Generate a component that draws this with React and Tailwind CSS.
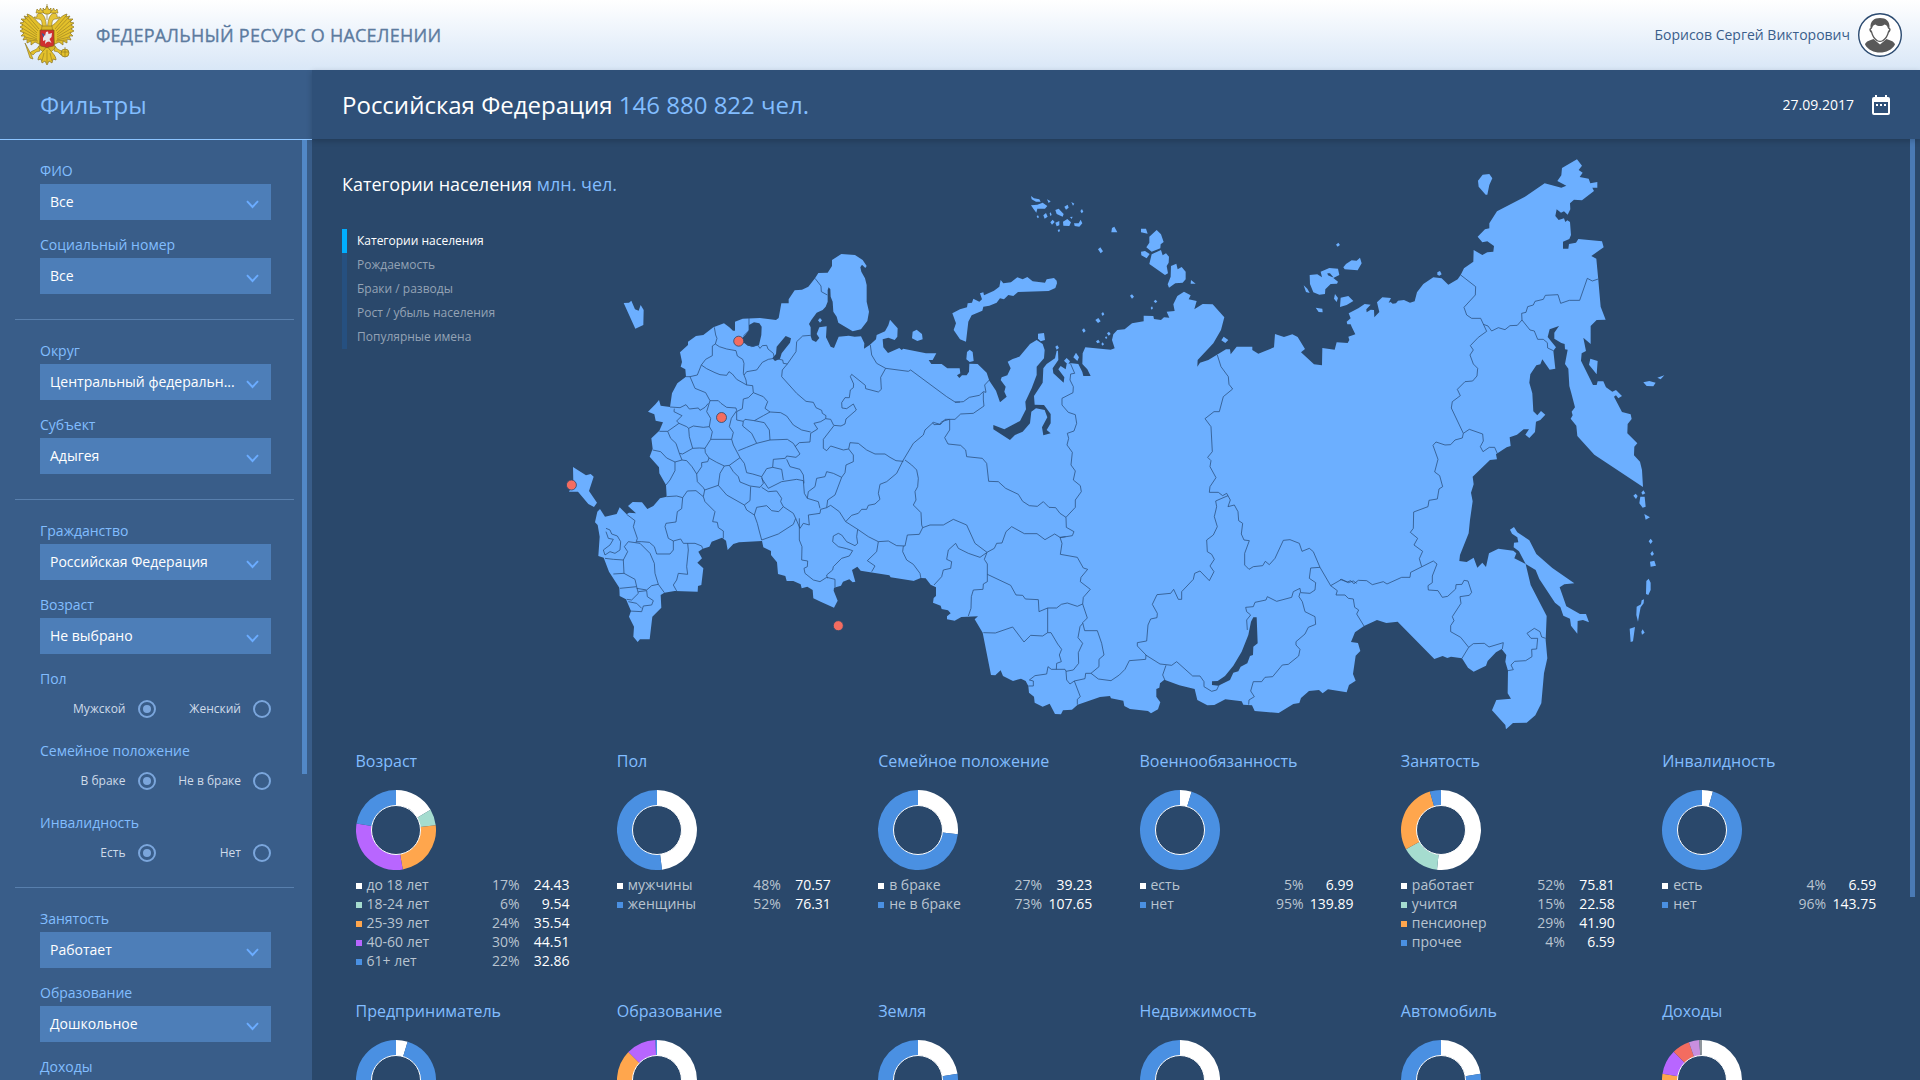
import React from "react";

const FONT = "font-['Open_Sans','Noto_Sans',sans-serif]";

/* ---------- map geometry: five survey sheets, three units per pixel ---------- */
const SHEETS = { A: [60, 270], B: [1080, 0], C: [2460, 0], D: [1080, 1080], E: [2400, 1020] };

function ring(parts) {
  const pts = [];
  parts.forEach(([sheet, text]) => {
    const [ox, oy] = SHEETS[sheet];
    const n = text.trim().split(/[\s,]+/).map(Number);
    for (let i = 0; i < n.length; i += 2) pts.push(`${n[i] + ox} ${n[i + 1] + oy}`);
  });
  return "M" + pts.join("L");
}

const MAINLAND = ring([
  ["A", "519,302 525,302 525,275 548,266 600,264 648,270 656,264 664,220 686,220 686,208 704,181 726,179 745,170 765,145 775,129 803,128 816,108 816,90 844,72 885,75 908,90 920,108 916,114 906,104 901,112 904,125 915,145 920,165 920,215 927,245 922,273 903,298 878,304 835,278 830,260 820,245 818,215 812,200 811,178 806,172 803,180 803,215 797,230 788,240 770,248 754,270 747,282 752,292 752,318 756,330 768,336 778,324 770,312 778,292 800,289 798,322 812,350 822,354 836,320 866,317 884,320 903,319 913,340 912,356 930,344 948,328 950,315 975,304 985,286 990,269 1013,295 1012,320 1004,330 985,323 968,328 970,352 984,369 1018,354 1025,360"],
  ["B", "10,626 78,640 109,640 98,660 86,660 94,672 125,672 142,685 179,685 181,700 171,706 178,714 186,706 200,706 207,695 208,671 233,672 260,698 268,722 288,752 300,787 320,770 313,755 317,740 302,720 305,712 322,706 332,685 323,665 338,657 358,650 390,612 410,600 428,612 434,630 432,655 410,680 410,705 395,745 376,785 378,808 360,843 313,868 280,855 280,868 330,900 345,885 368,875 390,850 394,815 408,805 434,810 442,832 426,862 430,886 452,880 440,870 452,850 452,822 432,795 404,794 402,768 428,728 430,685 440,672 465,655 470,632 474,632 475,660 458,685 460,700 491,728 493,712 475,688 482,678 497,688 500,672 515,670 535,672 547,696 550,708 572,708 562,688 547,672 548,640 556,622 632,629 644,625 636,600 640,583 652,570 674,568 696,550 731,544 731,527 760,528 762,537 783,540 792,532 808,533 800,515 824,513 820,493 832,468 852,455 872,466 866,478 890,483 883,508 908,492 938,493 973,532 963,570 940,610 893,660 892,680 900,668 925,660 978,628 990,628 992,643 1010,620 1057,620 1057,630 1075,641 1122,622 1125,582 1152,591 1177,583 1193,591 1215,627 1203,637 1242,673 1266,676 1267,624 1304,629 1310,607 1343,609 1348,600 1345,590 1366,583 1355,560 1352,553 1342,553 1340,545 1352,535 1346,520 1375,505"],
  ["C", "14,492 32,494 19,508 20,517 32,509 42,510 43,532 58,516 51,487 67,472 93,474 86,488 92,486 98,491 108,490 114,482 132,480 150,488 164,484 171,457 190,432 220,412 245,415 265,434 293,418 302,405 312,385 340,365 341,330 367,345 382,337 400,335 402,318 382,304 367,307 353,290 375,268 388,265 388,250 411,214 495,170 554,130 604,143 619,137 592,123 604,106 606,84 651,58 666,77 656,90 668,98 659,111 686,116 691,130 712,126 712,143 697,143 702,153 666,181 642,179 630,190 631,208 623,224 612,214 603,218 590,208 586,228 596,240 612,235 616,246 622,241 630,246 633,285 628,297 609,305 609,326 625,326 627,312 648,308 655,297 726,304 731,322 694,348 709,356 715,420 722,500 737,539 710,540 692,558 692,612 670,593 678,633 665,640 663,662 699,735 710,735 713,724 730,724 738,742 757,755 768,750 786,768 775,775 768,766 762,770 786,816 812,823 815,837 803,852 802,880 832,910 823,920 822,946 840,965 846,990 849,1041 703,944 652,888 649,857 632,836 638,826 635,815 645,802 634,760 628,738 625,686 615,672 623,629 615,628 614,612 604,609 583,596 583,578 597,558 569,568 563,591 588,622 580,632 586,686 569,689 547,658 541,673 529,676 511,703 508,728 517,760 520,814 532,826 543,813 556,824 541,840 528,845 525,876 508,894 496,884 507,868 491,868 471,884 449,892 452,918 440,922 408,943 411,958 390,960 338,1010 341,1033 333,1058 338,1084 330,1140"],
  ["E", "386,160 360,225 358,243 380,246 401,233 412,263 427,248 438,261 447,220 475,206 520,212 529,220 523,235 557,252 572,315 620,408 617,480 622,535 612,580 604,670 586,706 560,728 519,729 498,748 496,735 456,691 469,660 513,656 503,640 504,572 496,545 499,525 485,507 468,517 443,543 438,557 401,575 384,563 366,535 333,530 322,534 308,528 283,537 173,425 139,429 111,420 72,438 45,457 33,486 54,489 61,513 47,527 39,582 47,602 27,615 20,637"],
  ["D", "1340,577 1284,568 1268,580 1257,570 1227,573 1203,594 1198,609 1180,612 1136,639 1064,633 1056,616 1030,614 1025,604 976,598 943,615 922,616 892,600 884,567 838,556 793,539 780,550 778,563 769,567 769,590 781,607 774,628 753,640 744,633 690,627 673,618 670,602 633,595 630,588 600,591 533,614 516,629 489,631 483,643 465,642 449,611 428,620 404,608 402,590 387,578 385,558 377,543 363,536 339,543 309,528 302,511 286,526 273,525 248,398 224,358 234,349 184,351 164,362 141,358 141,349 152,340 144,331 125,327 122,317 99,308 101,294 108,288 108,262 92,254 77,235 62,234 42,242"],
  ["A", "1063,1053 992,1042 988,1036 940,1028 902,1022 892,1010 876,1020 886,1055 878,1057 868,1048 849,1055 843,1067 822,1073 821,1082 833,1112 822,1133 782,1115 760,1105 758,1080 742,1070 725,1075 722,1063 700,1053 680,1053 676,1038 654,1032 651,997 633,975 633,963 610,952 606,933 537,937 520,942 503,960 498,932 486,923 455,935 448,950 428,956 415,965 426,985 412,998 430,1015 424,1065 414,1068 413,1085 344,1083 313,1088 302,1095 304,1133 277,1160 269,1228 240,1228 233,1236 220,1220 222,1190 207,1160 213,1143 198,1108 179,1098 178,1073 147,1025 131,983 115,978 119,920 113,885 105,877 112,845 120,837 135,860 170,852 179,832 200,853 207,848 228,850 204,828 218,816 246,817 262,837 280,828 300,805 320,800 318,765 298,730 297,712 269,680 278,656 274,625 298,602 309,577 287,572 283,553 264,545 287,522 297,510 302,527 330,531 336,490 352,460 378,440 376,418 362,410 366,396 360,367 384,345 384,335 408,318 430,315 460,292 492,280 508,292"],
]);

const ISLANDS = [
  ["A", "191,219 207,218 214,212 225,238 236,242 242,225 251,240 250,285 226,296"],
  ["A", "39,711 78,736 92,732 101,740 87,783 111,818 102,831 85,822 54,785 27,785 40,760"],
  ["A", "780,264 786,271 780,278 774,271"],
  ["A", "1070,299 1086,312 1088,328 1072,333 1056,325 1058,305"],
  ["A", "1229,359 1238,366 1241,393 1229,396 1219,388 1221,366"],
  ["B", "471,430 466,444 446,453 354,456 340,468 325,465 312,478 300,475 290,488 268,497 250,500 247,512 215,526 205,545 198,605 180,598 161,570 168,550 157,520 180,508 201,502 203,490 216,488 220,476 238,485 246,478 240,460 250,457 252,466 282,452 298,440 302,420 310,430 333,427 352,412 368,418 382,411 398,424 435,428 440,418 462,414 470,422"],
  ["B", "414,581 432,579 435,600 422,604 414,596"],
  ["B", "520,652 528,638 537,652 532,663"],
  ["B", "492,662 500,654 510,664 504,674"],
  ["B", "466,620 472,616 477,624 470,629"],
  ["B", "393,168 402,175 418,178 422,185 408,185 395,178"],
  ["B", "393,196 412,194 428,188 442,198 435,206 412,206 409,218 400,206"],
  ["B", "441,178 452,184 446,189"], ["B", "466,210 476,206 491,222 488,230 470,222"],
  ["B", "493,200 503,194 506,203 498,209"], ["B", "514,186 523,191 519,197"], ["B", "541,213 546,207 550,215 545,220"],
  ["B", "430,226 438,219 443,230 434,236"], ["B", "410,229 414,226 417,232 413,235"], ["B", "449,220 452,217 455,225 451,228"],
  ["B", "451,247 458,239 464,246 456,254"], ["B", "466,248 478,243 478,256 470,259"], ["B", "489,245 502,237 513,247 508,258 490,257"],
  ["B", "510,231 518,230 515,237"], ["B", "522,250 536,250 542,239 547,250 538,260 524,258"], ["B", "473,271 478,267 480,273 476,277"],
  ["B", "636,264 643,260 652,277 634,277"], ["B", "594,328 601,322 609,334 602,340"],
  ["B", "723,266 738,266 743,281 723,277"], ["B", "770,270 783,283 791,306 782,313 781,325 755,335 739,322 748,308 748,290"],
  ["B", "723,335 735,333 749,342 740,355 724,346"], ["B", "755,343 783,330 788,346 798,340 807,350 806,368 800,378 804,400 795,405 748,372"],
  ["B", "813,378 829,371 833,388 845,381 857,395 857,418 848,428 826,430 807,443 803,433 812,410"],
  ["B", "873,420 887,431 872,431"], ["B", "690,467 696,463 702,470 696,476"], ["B", "761,484 767,479 772,485 766,489"], ["B", "752,504 756,499 759,505 755,509"],
  ["B", "604,521 609,516 613,523 608,528"], ["B", "586,540 595,534 602,544 594,549"], ["B", "546,570 552,565 557,573 551,578"],
  ["B", "621,580 627,575 632,582 626,587"], ["B", "588,604 595,599 600,607 592,610"], ["B", "615,592 619,589 622,594 618,597"], ["B", "604,612 608,607 612,613 608,617"],
  ["B", "964,601 971,590 985,600 976,609"],
  ["B", "1308,314 1315,308 1320,315 1313,320"],
  ["B", "1330,382 1338,372 1355,361 1370,362 1380,353 1385,370 1373,391 1334,388"],
  ["B", "1229,405 1252,403 1266,412 1262,395 1288,384 1314,386 1318,405 1300,414 1314,425 1311,431 1292,432 1276,448 1275,462 1258,464 1240,457 1230,432"],
  ["B", "1211,436 1222,446 1229,459 1218,456"], ["B", "1305,462 1314,474 1310,486 1302,476"],
  ["B", "1322,473 1345,468 1360,483 1340,495 1320,501"], ["B", "1247,503 1267,506 1268,517 1256,516"],
  ["C", "368,104 388,102 397,115 388,135 382,164 377,164 356,140 354,122"],
  ["C", "232,397 240,393 245,403 238,407 232,404"],
  ["C", "691,656 713,663 710,703 687,674"], ["C", "850,727 868,723 887,728 880,739 860,738"], ["C", "892,713 913,706 902,718"],
  ["E", "510,149 522,141 532,157 568,181 589,222 637,264 703,310 673,313 659,322 679,379 720,402 738,402 747,427 729,420 713,423 712,461 693,437 690,416 670,407 661,381 645,368 598,297 587,270 557,252 537,214 521,202 522,188 535,187 532,172 516,161"],
  ["E", "904,38 910,31 916,40 908,44"], ["E", "880,47 887,41 893,48 888,57"], ["E", "901,50 914,50 917,80 908,83 898,70"],
  ["E", "913,102 930,112 917,119"], ["E", "926,184 932,176 938,184 932,192"], ["E", "931,221 937,213 942,222 936,228"], ["E", "930,245 943,242 948,257 932,260"],
  ["E", "919,303 926,296 932,308 932,330 925,345 918,342"], ["E", "905,361 912,358 911,370 902,382 897,408 894,425 889,405 890,380 903,373"],
  ["E", "869,446 885,441 879,484 872,486"], ["E", "904,455 908,448 914,458 906,464"],
].map((p) => ring([p]) + "Z").join("");

const LAKES = [
  ["A", "567,285 582,277 598,280 605,290 604,315 597,345 580,350 563,347 552,338 546,325 556,315 567,300"],
  ["A", "677,318 693,325 690,338 665,370 660,386 645,393 637,385 648,372 650,350 660,338"],
  ["D", "1060,352 1070,352 1073,430 1060,440 1059,465 1050,468 1042,490 1022,500 1015,514 1000,518 990,540 955,557 936,555 936,544 953,543 975,528 1000,497 1025,455 1045,405 1053,365"],
  ["B", "1282,400 1290,400 1300,412 1312,415 1296,411 1284,406"],
].map((p) => ring([p]) + "Z").join("");

const BORDERS = [
  ["A", "463,292 467,315 471,325 466,342 457,348 457,377 437,388 424,405 412,435 390,440 378,440"],
  ["A", "466,342 478,350 500,357 528,362 532,378 548,388 552,400 550,430 558,450 560,465"],
  ["A", "567,264 567,302 550,318"], ["A", "560,340 575,350 593,345 600,355 607,347 620,346 624,357 640,370 643,385 625,388 607,397 590,420 560,425 552,435"],
  ["A", "424,405 440,416 465,428 480,434 500,436 507,425 517,432 530,448 560,465 578,467 580,488"],
  ["A", "640,385 668,390 670,400 682,402 708,365 710,335 728,318 752,316"],
  ["A", "682,402 667,420 665,440 710,490 738,514 760,517 768,533 785,541 787,550 798,557 797,566"],
  ["A", "765,145 783,168 784,185 802,195"],
  ["A", "931,345 935,375 950,400 977,415 962,442 964,478 955,486 917,476 916,466 875,433 871,440 881,462 880,473 871,480 868,503 855,503 845,518 846,534 860,536 880,522 889,540 858,567 855,582 843,588 821,586 812,568 797,566 782,575 762,580 773,597 752,610 750,636 718,638 705,650"],
  ["A", "977,415 1045,424 1052,420 1160,500 1185,516 1200,516"],
  ["A", "390,440 405,475 437,488 450,512 475,512 483,520 500,532 528,534 530,542 514,565 508,590 520,607 515,628 452,628 457,605 448,590 452,565 440,545 450,512"],
  ["A", "330,531 360,533 378,524 388,537 415,534 420,541 435,532 445,520"],
  ["A", "343,536 342,545 366,557 350,573 357,580 323,604 298,604"], ["A", "357,580 380,590 386,595 388,620 398,655 368,672 358,670 348,640 332,625 323,604"],
  ["A", "386,595 400,588 430,592 448,590"], ["A", "398,655 418,654 435,655 452,628"], ["A", "435,655 436,668 447,684 443,695 425,698 425,710 410,732 396,710 380,692 366,690 358,670"],
  ["A", "278,660 302,665 320,684 345,696 345,722 330,750 318,765"], ["A", "345,696 366,690"],
  ["A", "447,684 470,697 493,708 508,706 540,683 520,645 515,628"],
  ["A", "410,732 412,755 430,773 434,780 475,766 480,730 493,708"], ["A", "320,800 350,798 368,803 382,783 408,782 430,800 434,780"],
  ["A", "368,803 365,836 352,845 348,876 318,880 315,890 325,925 340,933 340,960 330,972 290,972 283,950 268,937 245,935 230,935"],
  ["A", "430,800 435,815 465,845 458,875 472,877 475,893 490,903 490,925"],
  ["A", "580,488 610,500 623,515 615,535 630,546 610,557 583,572 555,568 550,574 530,570 530,545 547,536 550,507 565,503 580,488"],
  ["A", "630,546 662,548 680,558 700,585 725,600 752,606"], ["A", "583,572 613,578 628,600 630,630 590,640"], ["A", "550,574 548,588 575,610 590,640 560,652 535,662"],
  ["A", "630,630 682,628 700,640 720,672 708,682 680,678 676,685 640,688 638,712 620,716 605,740 578,732 560,728 553,700 540,683"],
  ["A", "508,706 520,725 535,740 540,756 570,768 600,772 610,760 605,740"], ["A", "475,766 500,795 553,825 570,812 572,770"],
  ["A", "553,825 560,840 583,855 592,880 597,900 605,930 655,912 700,883 707,865 700,850 670,830 656,845 635,842 620,827 590,832 583,855"],
  ["A", "605,772 625,785 650,783 665,805 662,815 670,830"], ["A", "605,745 625,775 665,755 710,748 730,752 733,790 742,805 775,815 780,835"],
  ["A", "638,712 665,718 670,750"], ["A", "680,688 690,710 720,718 730,735 732,760"],
  ["A", "707,865 720,895 730,880 748,885 745,855 780,850 782,838 800,833 812,826 838,845 857,875 893,898 890,920 893,940 885,947 860,935 845,915 835,910 820,918 818,935 835,950 860,956 878,962 868,978 845,985 820,1010 818,1020 800,1035 802,1045"],
  ["A", "718,865 718,930 726,950 725,990 743,993 742,1010 732,1015 735,1030 760,1050 780,1055 800,1042 825,1048 825,1072"],
  ["A", "742,805 745,785 765,770 770,745 795,740 800,725 820,730 845,742 825,795 803,810 800,833"],
  ["A", "845,742 855,728 858,705 880,695 880,675 866,657 870,638 895,640 920,660 945,672 975,672 990,682 1008,692 1030,694"],
  ["A", "866,657 850,660 812,648 800,662 790,655 790,628 821,588"],
  ["A", "1168,568 1145,575 1140,583 1120,577 1095,600 1090,615 1060,640 1030,690 1010,730 980,755 960,763 955,790 960,808 945,822 925,826 920,838 905,838 895,850 875,856 857,875"],
  ["A", "1035,690 1055,705 1070,720 1075,745 1073,770 1065,785 1068,810 1060,825 1083,848 1085,885 1088,893"],
  ["A", "893,898 925,920 955,935 950,965 922,992 945,1008 935,1025"], ["A", "955,935 985,933 1010,947 1035,948 1042,915 1078,913 1088,893 1110,885 1150,885 1180,868 1220,885 1245,940 1281,967"],
  ["A", "1030,948 1028,965 1040,990 1060,1003 1080,1030 1083,1046"], ["A", "1122,1065 1145,1040 1150,1020 1172,1015 1175,995 1160,988 1165,960 1187,940 1195,955 1225,970 1260,982 1280,968"],
  ["A", "313,1088 295,1063 285,1030 283,1000 270,970 240,940 205,935 193,950 203,965 190,990 192,1030 225,1048 230,1070 180,1075"],
  ["A", "135,985 160,988 190,990"], ["A", "160,1032 192,1030"], ["A", "230,1075 260,1080 275,1067 295,1063"],
  ["A", "138,895 150,900 155,912 172,918 182,935 180,960 165,970 150,965 135,975 130,960 150,945 160,928 145,925 138,905"],
  ["A", "200,853 225,872 220,890 232,925 228,938"], ["A", "340,933 362,927 370,940 405,940 425,948 428,956"], ["A", "383,940 385,960 380,1010 383,1033 355,1030 350,1050 340,1065 350,1083"],
  ["A", "230,1070 235,1090 215,1110 200,1108"], ["A", "235,1085 260,1082 262,1100 280,1112 275,1125 250,1128 245,1145 207,1143"], ["A", "205,1115 230,1120 245,1135"],
  ["B", "165,787 190,785 208,772 238,766 250,755 258,757 254,735 268,720"], ["B", "250,757 250,780 252,798 220,820 182,822 165,838 135,838 122,853 102,854 98,848"],
  ["B", "149,838 149,870 134,893 144,912 182,916 197,930 200,950 247,955 260,970 266,1024 295,1025 317,1045 355,1063 368,1084 388,1097 412,1099 430,1085 447,1102 467,1103 480,1120 498,1132"],
  ["B", "512,672 524,700 512,702 510,720 520,740 519,758 486,775 486,795 505,817 526,824 530,850 522,873 502,880 506,895 501,915 517,937 513,975 526,993 520,1020 541,1037 544,1055 526,1080 526,1102 498,1132 499,1162 522,1175 517,1187 480,1193"],
  ["B", "952,645 963,680 985,710 987,733 998,747 970,770 958,815 942,815 915,836 933,860 937,935 923,952 933,962 930,980 948,1013 930,1040 928,1057 955,1057 968,1067 980,1060 991,1080 984,1100 1003,1095 1014,1115 1016,1142 1028,1150 1024,1182 1032,1200"],
  ["B", "984,1067 947,1083 950,1100 943,1130 952,1160 940,1185 920,1200"],
  ["C", "302,405 347,440 346,465 312,502 320,525 335,535 362,535 380,574 355,592 331,617 340,630 330,645 340,672 353,685 351,708 338,723 315,725 292,748 301,767 277,785 274,804 310,880 307,894 285,900 272,914 255,915 228,906 219,916 234,958 224,996 239,1007 248,1040 237,1047 232,1077 207,1081 204,1100 161,1116 160,1165 151,1177 173,1195"],
  ["C", "370,553 384,558 395,573 415,563 435,569 450,557 472,556 486,540 485,520 498,517 503,500 520,495 525,484 550,478 556,466 594,464 602,490 628,481 659,481 682,415 697,423 715,417"],
  ["C", "486,540 510,570 523,573 533,598 550,598 562,608 563,624 580,632"], ["C", "310,880 328,868 368,882 370,903 361,920 369,935 388,922 404,922 413,943"],
  ["D", "261,157 283,145 290,130 306,129 318,95 335,80 373,101 411,101 435,119 464,102 480,112 497,110"],
  ["D", "261,157 253,178 262,192 262,245 250,252 249,268 220,270 214,290 213,325 205,348"], ["D", "262,223 332,256 348,285 368,286 376,297 415,299 417,335 443,324 470,324 484,313 502,309 532,319 548,312 550,292 571,268 541,245 543,232 563,208 550,204 532,172 481,163 486,130 480,112"],
  ["D", "250,398 286,399 338,381 372,426 392,406 428,408 443,398 443,324"], ["D", "443,398 453,398 473,432 485,448 478,465 484,485 470,490 469,508"],
  ["D", "385,558 400,558 400,543 388,540 405,527 440,522 444,500 454,508 495,508 498,514 500,540 510,552 523,543 555,536 557,520 573,520 597,500 597,478 612,465 605,430 592,392 554,392 548,368 562,354 548,312"],
  ["D", "498,514 520,510 536,490 535,458 548,430 534,413 540,380 548,370"], ["D", "523,543 541,590 532,598 532,614"],
  ["D", "573,520 595,537 633,542 658,525 675,508 688,482 737,478 738,465 712,438 712,428 740,423 744,375 752,357 771,353 772,340 757,313 771,284 812,280 821,268 835,298 845,298 845,275 880,238 884,220 900,213 928,242 942,215 930,198 943,178 935,163 922,155 920,120"],
  ["D", "737,465 780,492 815,496 830,485 878,528 900,528 912,545 912,560 935,574 950,570 957,555"], ["D", "798,496 788,525 795,541"],
  ["D", "1032,120 1048,122 1034,160 1034,195 1047,208 1060,200 1088,197 1096,184 1108,194 1125,175 1150,121 1170,119 1198,130 1206,154 1228,145 1240,155 1260,202 1292,257 1312,272 1308,285 1335,285 1345,295 1360,297 1364,322 1376,330 1370,342 1392,378"],
  ["D", "1260,202 1232,204 1228,235 1247,248 1245,270 1230,280 1202,278 1200,265 1180,275 1175,292 1130,304 1102,290 1098,300 1065,307 1060,320 1037,322 1040,335 1052,345 1040,360 1042,390"],
  ["D", "1200,278 1197,290 1207,305 1215,335 1245,350 1247,373 1225,382 1215,402 1188,425 1188,435 1200,448 1196,468 1165,493 1147,495 1118,530 1095,532 1085,545 1060,545 1052,573 1063,590 1047,600 1046,614"],
  ["D", "1292,257 1325,238 1345,248 1360,243 1370,250"],
  ["E", "0,298 22,306 32,302 42,311 55,301 80,302 97,314 130,305 141,312 185,292 210,292 212,277 280,243 291,252 277,288 277,308 264,317 265,330 294,332 307,352 323,349 347,327 348,314 366,313 372,301 384,303 395,337 388,346 360,350 363,370 337,410 342,422 332,437 332,455 362,472 386,502 366,535"],
  ["E", "233,175 222,195 248,214 238,236 245,260"], ["E", "386,502 400,491 433,490 447,501 490,488 487,507"],
  ["E", "504,572 520,569 513,555 524,544 557,542 576,530 575,508 590,507 593,475 573,475 561,460 583,445 600,455 605,471 617,475"],
].map((p) => ring([p])).join("");

const CITIES = [[198.7, 201.2], [181.5, 277.5], [31.4, 345], [298.3, 485.7]];

function RegionMap() {
  return (
    <svg width="1160" height="600" viewBox="0 0 1160 600" className="block shrink-0">
      <g transform="scale(0.33333)" strokeLinejoin="round">
        <path d={MAINLAND + "Z"} fill="#6cafff" />
        <path d={ISLANDS} fill="#6cafff" />
        <path d={LAKES} fill="#2a486b" />
        <path d={BORDERS} fill="none" stroke="#2a4f7c" strokeWidth="2.3" />
      </g>
      {CITIES.map(([x, y]) => (
        <circle key={x} cx={x} cy={y} r="5" fill="#f36c60" stroke="#2a486b" strokeWidth="0.8" />
      ))}
    </svg>
  );
}

/* ---------- header pictures ---------- */
function Emblem() {
  const wing = (
    <g>
      <path d="M24 22C18 20 16 12 8 10L9 13L5 12L7 15L2 15L5 18L1 19L4 21L1 23L4 25L1 27L5 29L2 32L6 32L4 36L8 35L8 39L12 37L12 41L16 38L20 40L24 36Z" fill="#e3c02a" stroke="#8a7220" strokeWidth=".7" />
      <path d="M6 13L19 27M4 16L18 29M3 20L18 31M3 24L18 33M4 28L18 35M6 33L18 36M9 36L19 37M9 12L20 25" stroke="#917822" strokeWidth=".6" />
      <path d="M26 26C22 24 24 19 22 16C20 14 16 16 15 13L18 13C17 9 22 8 24 11C27 14 27 20 28 26Z" fill="#e6c538" stroke="#8a7220" strokeWidth=".6" />
      <path d="M17 9L18 5L20 7L21.500 4L23 7L25 5.500L25 9Z" fill="#e6c42f" stroke="#8a7220" strokeWidth=".6" />
      <path d="M20 42C17 47 13 46 11 49L14 51L17 48L21 47Z" fill="#e3c02a" stroke="#8a7220" strokeWidth=".6" />
    </g>
  );
  return (
    <svg width="56" height="62" viewBox="0 0 56 62" fill="none" className="block shrink-0">
      {wing}
      <g transform="matrix(-1 0 0 1 56 0)">{wing}</g>
      <path d="M23 22H33L36 44L28 52L20 44Z" fill="#d9b627" stroke="#8a7220" strokeWidth=".6" />
      <path d="M28 42C24 48 19 51 19 56L22 55L23 59L26 57L28 61L30 57L33 59L34 55L37 56C37 51 32 48 28 42Z" fill="#e3c02a" stroke="#8a7220" strokeWidth=".7" />
      <path d="M28 46V59M25 49L23 57M31 49L33 57" stroke="#917822" strokeWidth=".6" />
      <path d="M24 8L24 4L26 6L28 2L30 6L32 4L32 8L30 10H26ZM28 0V3M28 10V16" fill="#e6c42f" stroke="#8a7220" strokeWidth=".7" />
      <path d="M6 39L11 54L14 55L12 50Z" fill="#e3c02a" stroke="#8a7220" strokeWidth=".6" />
      <circle cx="46" cy="49" r="4" fill="#e3c02a" stroke="#8a7220" strokeWidth=".7" />
      <path d="M46 43V53M42 48H50" stroke="#8a7220" strokeWidth=".6" />
      <path d="M21 26H35V41C35 43 30 42 28 44C26 42 21 43 21 41Z" fill="#cf2f2f" stroke="#7d5a16" strokeWidth=".7" />
      <path d="M24 34L25 31L26 32L27 28L29 27.500L29.500 30L33 29L32.500 33L30.500 35L32.500 39L30 37.500L28 38L26 40L26.500 36L24 37Z" fill="#e8e6ea" />
      <path d="M22.500 29L25.500 30.500L24.500 33.500Z" fill="#2c5fa8" />
    </svg>
  );
}

function Avatar() {
  return (
    <svg width="44" height="44" viewBox="0 0 44 44" className="block shrink-0">
      <circle cx="22" cy="22" r="21.300" fill="#fff" stroke="#2b4a70" strokeWidth="1.400" />
      <path d="M7 31.500C8 28 12 27.500 15.500 26L22 31.500L28.500 26C32 27.500 36 28 37 31.500C34 37 28 39.500 22 39.500C16 39.500 10 37 7 31.500Z" fill="#595959" />
      <path d="M12.500 15C12 8 16 5 22 5C28 5 32 8 31.500 15C33.500 15 32.500 19 31 19.500C29.500 25 26 29 22 29C18 29 14.500 25 13 19.500C11.500 19 10.500 15 12.500 15Z" fill="#595959" />
      <path d="M14 15.500C14.500 13 15.500 12 17.500 11.500C20 13.500 24 13.500 26.500 11.500C28.500 12 29.500 13 30 15.500L31.300 16.300L29.800 18.700C28.500 24 25 27.800 22 27.800C19 27.800 15.500 24 14.200 18.700L12.700 16.300Z" fill="#fff" />
    </svg>
  );
}

/* ---------- filters ---------- */
function Label({ children }) {
  return <div className="h-5 text-sm leading-5 text-[#82bdff]">{children}</div>;
}

function Select({ label, value }) {
  return (
    <div className="mb-[15px] px-10">
      <Label>{label}</Label>
      <div className="mt-[3px] flex h-9 w-[231px] items-center justify-between bg-[#4d7eb8] pl-2.5 pr-[12px] text-sm text-white">
        <span className="whitespace-nowrap">{value}</span>
        <svg width="13" height="9" viewBox="0 0 13 9" fill="none" className="mt-[5px] shrink-0">
          <path d="M1 1.200L6.500 7L12 1.200" stroke="#6bacff" strokeWidth="1.900" />
        </svg>
      </div>
    </div>
  );
}

function Radios({ label, options }) {
  return (
    <div className="mb-5 px-10">
      <Label>{label}</Label>
      <div className="mt-2 grid h-6 w-[231px] grid-cols-2 text-xs text-[#cfdbe9]">
        {options.map((o, i) => (
          <div key={o} className="flex items-center justify-end gap-3">
            <span className="whitespace-nowrap">{o}</span>
            <span className="flex h-[18px] w-[18px] items-center justify-center rounded-full border-2 border-[#7ba6dc]">
              {i === 0 && <span className="h-2 w-2 rounded-full bg-[#7ba6dc]" />}
            </span>
          </div>
        ))}
      </div>
    </div>
  );
}

function Rule({ className }) {
  return <div className={`mb-[21px] ml-[15px] h-px w-[279px] bg-[#587fad] ${className}`} />;
}

function Sidebar() {
  return (
    <aside className="flex w-[312px] shrink-0 flex-col bg-[#395d89]">
      <div className="flex h-[70px] shrink-0 items-center border-b border-[#8cc4ff] pl-10 text-2xl text-[#82bdff]">Фильтры</div>
      <div className="flex min-h-0 flex-1 overflow-hidden">
        <div className="w-[302px] shrink-0 pt-[21px]">
          <Select label="ФИО" value="Все" />
          <Select label="Социальный номер" value="Все" />
          <Rule className="mt-[25px]" />
          <Select label="Округ" value="Центральный федеральн..." />
          <Select label="Субъект" value="Адыгея" />
          <Rule className="mt-[25px]" />
          <Select label="Гражданство" value="Российская Федерация" />
          <Select label="Возраст" value="Не выбрано" />
          <Radios label="Пол" options={["Мужской", "Женский"]} />
          <Radios label="Семейное положение" options={["В браке", "Не в браке"]} />
          <Radios label="Инвалидность" options={["Есть", "Нет"]} />
          <Rule className="mt-[22px]" />
          <Select label="Занятость" value="Работает" />
          <Select label="Образование" value="Дошкольное" />
          <div className="px-10"><Label>Доходы</Label></div>
        </div>
        <div className="h-[634px] w-[5px] bg-[#5288c7]" />
      </div>
    </aside>
  );
}

/* ---------- charts ---------- */
const W = "#ffffff", G = "#a5dccf", O = "#ffa64d", P = "#b866ff", B = "#4a90e2", R = "#f36c60";

const CHARTS = [
  { title: "Возраст", parts: [[W, 16.6], [G, 6.5], [O, 24.2], [P, 30.3], [B, 22.4]], rows: [["до 18 лет", "17%", "24.43"], ["18-24 лет", "6%", "9.54"], ["25-39 лет", "24%", "35.54"], ["40-60 лет", "30%", "44.51"], ["61+ лет", "22%", "32.86"]] },
  { title: "Пол", parts: [[W, 48], [B, 52]], rows: [["мужчины", "48%", "70.57"], ["женщины", "52%", "76.31"]] },
  { title: "Семейное положение", parts: [[W, 26.7], [B, 73.3]], rows: [["в браке", "27%", "39.23"], ["не в браке", "73%", "107.65"]] },
  { title: "Военнообязанность", parts: [[W, 4.7], [B, 95.3]], rows: [["есть", "5%", "6.99"], ["нет", "95%", "139.89"]] },
  { title: "Занятость", parts: [[W, 51.6], [G, 15.4], [O, 28.5], [B, 4.5]], rows: [["работает", "52%", "75.81"], ["учится", "15%", "22.58"], ["пенсионер", "29%", "41.90"], ["прочее", "4%", "6.59"]] },
  { title: "Инвалидность", parts: [[W, 4.4], [B, 95.6]], rows: [["есть", "4%", "6.59"], ["нет", "96%", "143.75"]] },
  { title: "Предприниматель", parts: [[W, 4.7], [B, 95.3]], rows: [] },
  { title: "Образование", parts: [[W, 50], [G, 15], [O, 22.3], [P, 12.1], [B, 0.6]], rows: [] },
  { title: "Земля", parts: [[W, 22.5], [B, 77.5]], rows: [] },
  { title: "Недвижимость", parts: [[W, 52], [B, 48]], rows: [] },
  { title: "Автомобиль", parts: [[W, 22.5], [B, 77.5]], rows: [] },
  { title: "Доходы", parts: [[W, 50], [G, 12], [O, 15.5], [P, 10], [R, 7.2], ["#c98fdf", 4.2], ["#8f969c", 1.1]], rows: [] },
];

function Donut({ parts }) {
  const at = (p, r) => {
    const a = (p / 100) * 2 * Math.PI;
    return `${(40 + r * Math.sin(a)).toFixed(2)} ${(40 - r * Math.cos(a)).toFixed(2)}`;
  };
  let from = 0;
  return (
    <svg width="80" height="80" viewBox="0 0 80 80" className="block">
      {parts.map(([color, share], i) => {
        const to = from + share;
        const big = share > 50 ? 1 : 0;
        const d = `M${at(from, 40)}A40 40 0 ${big} 1 ${at(to, 40)}L${at(to, 24.5)}A24.5 24.5 0 ${big} 0 ${at(from, 24.5)}Z`;
        from = to;
        return <path key={i} d={d} fill={color} />;
      })}
      <circle cx="40" cy="40" r="24.500" fill="none" stroke="#fff" strokeWidth="1" />
    </svg>
  );
}

function Chart({ chart }) {
  return (
    <div className="h-[250px] w-[214px]">
      <h3 className="h-6 text-base leading-6 text-[#82bdff] whitespace-nowrap">{chart.title}</h3>
      <div className="mt-[17px] mb-[5px]"><Donut parts={chart.parts} /></div>
      {chart.rows.map(([name, pct, value], i) => (
        <div key={name} className="flex h-[19px] items-center text-sm leading-[19px] text-[#b9c4d0]">
          <span className="mt-[3px] mr-[5px] h-1.5 w-1.5" style={{ backgroundColor: chart.parts[i][0] }} />
          <span className="flex-1">{name}</span>
          <span>{pct}</span>
          <span className="w-[50px] text-right text-white">{value}</span>
        </div>
      ))}
    </div>
  );
}

const TABS = ["Категории населения", "Рождаемость", "Браки / разводы", "Рост / убыль населения", "Популярные имена"];

export default function App() {
  return (
    <div className={`flex h-[1080px] w-[1920px] flex-col overflow-hidden bg-[#2a486b] ${FONT}`}>
      <header className="flex h-[70px] shrink-0 items-center bg-linear-to-b from-white to-[#d9e7f7] pl-[19px] pr-[18px]">
        <Emblem />
        <h1 className="ml-[21px] flex-1 text-lg tracking-[0.25px] text-[#5c7b9f] [-webkit-text-stroke:0.35px_#5c7b9f]">ФЕДЕРАЛЬНЫЙ РЕСУРС О НАСЕЛЕНИИ</h1>
        <span className="mr-2 text-sm text-[#3a5e8b]">Борисов Сергей Викторович</span>
        <Avatar />
      </header>
      <div className="flex min-h-0 flex-1">
        <Sidebar />
        <main className="flex min-w-0 flex-1 flex-col">
          <div className="z-10 flex h-[69px] shrink-0 items-center bg-[#2f5078] pl-[30px] pr-[30px] shadow-[0_2px_6px_rgba(0,0,0,0.2)]">
            <h2 className="flex-1 text-2xl text-white">Российская Федерация <span className="text-[#82bdff]">146 880 822 чел.</span></h2>
            <span className="mr-[18px] text-sm text-white">27.09.2017</span>
            <svg width="18" height="20" viewBox="0 0 18 20" className="block">
              <path fillRule="evenodd" fill="#fff" d="M3 0H5V2H13V0H15V2H16A2 2 0 0 1 18 4V18A2 2 0 0 1 16 20H2A2 2 0 0 1 0 18V4A2 2 0 0 1 2 2H3ZM2 7V18H16V7ZM4 9H6V11H4ZM8 9H10V11H8ZM12 9H14V11H12Z" />
            </svg>
          </div>
          <div className="flex min-h-0 flex-1 overflow-hidden">
            <div className="w-[1598px] shrink-0">
              <div className="flex h-[610px] pl-[30px]">
                <div className="w-[198px] shrink-0 pt-8">
                  <h2 className="h-[27px] whitespace-nowrap text-lg leading-[27px] text-white">Категории населения <span className="text-[#82bdff]">млн. чел.</span></h2>
                  <ul className="mt-[31px] text-xs">
                    {TABS.map((t, i) => (
                      <li key={t} className={`flex h-6 items-center whitespace-nowrap border-l-[5px] pl-2.5 ${i === 0 ? "border-[#00aeff] text-white" : "border-[#265080] text-[#94a3b5]"}`}>{t}</li>
                    ))}
                  </ul>
                </div>
                <div className="pt-px"><RegionMap /></div>
              </div>
              <div className="box-content grid w-[1568px] grid-cols-6 pl-[43.5px]">
                {CHARTS.map((c) => <Chart key={c.title} chart={c} />)}
              </div>
            </div>
            <div className="h-[758px] w-[5px] bg-[#4a7ab5]" />
          </div>
        </main>
      </div>
    </div>
  );
}
